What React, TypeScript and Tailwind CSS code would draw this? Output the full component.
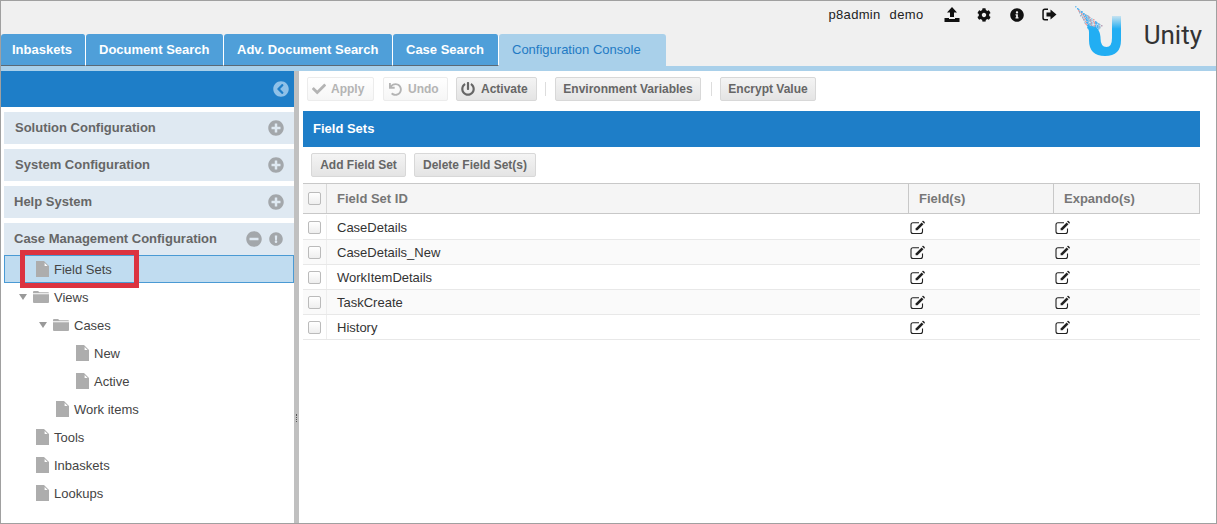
import React from "react";
import { FaCheck, FaUndo, FaPowerOff, FaPlusCircle, FaMinusCircle, FaExclamationCircle, FaChevronCircleLeft, FaCog, FaInfoCircle } from "react-icons/fa";

const UploadIcon = () => (
  <svg width="16" height="16" viewBox="0 0 16 16" fill="#111">
    <path d="M8 0 L13 5.5 H10 V10 H6 V5.5 H3 Z" />
    <path d="M0.5 11 H5 V12 H11 V11 H15.5 V15 H0.5 Z" />
  </svg>
);
const SignOutIcon = () => (
  <svg width="15" height="14" viewBox="0 0 15 14" fill="#111">
    <path d="M6 2 H3 Q1.8 2 1.8 3.2 V9.8 Q1.8 11 3 11 H6 V12.5 H2.8 Q0.3 12.5 0.3 10 V3 Q0.3 0.5 2.8 0.5 H6 Z" />
    <path d="M4.5 4.5 H8.5 V1.5 L14.5 6.5 L8.5 11.5 V8.5 H4.5 Z" />
  </svg>
);
const EditIcon = () => (
  <svg width="16" height="15" viewBox="0 0 16 15" className="shrink-0">
    <path d="M9 2.7 H3 Q1 2.7 1 4.7 V11.5 Q1 13.5 3 13.5 H10.5 Q12.5 13.5 12.5 11.5 V8.5" fill="none" stroke="#222" strokeWidth="1.1" />
    <path d="M5.6 8.4 L11.6 2.4 L13.5 4.3 L7.5 10.3 H5.6 Z" fill="#222" />
    <path d="M12.4 1.1 Q13 0.5 13.6 1.1 L14.6 2.1 Q15.2 2.7 14.6 3.3 L14.2 3.7 L12.1 1.6 Z" fill="#222" />
  </svg>
);
const FileIcon = () => (
  <svg width="13" height="16" viewBox="0 0 13 16" className="shrink-0">
    <path d="M0 0 H8 L13 5 V16 H0 Z" fill="#adadad" />
    <path d="M8.6 2 L11.6 5 H8.6 Z" fill="#ffffff" />
  </svg>
);
const FolderIcon = () => (
  <svg width="16" height="12" viewBox="0 0 16 12" className="shrink-0">
    <path d="M0 1 Q0 0 1 0 H5 L6.5 1.2 H15 Q16 1.2 16 2.2 H0 Z" fill="#adadad" />
    <path d="M0 3.2 H16 V11 Q16 12 15 12 H1 Q0 12 0 11 Z" fill="#adadad" />
  </svg>
);
const Caret = () => <span className="w-0 h-0 shrink-0 border-l-[4px] border-r-[4px] border-t-[6px] border-l-transparent border-r-transparent border-t-[#999]" />;

const Logo = () => {
  const palette = ["#7cc4ee", "#e8a0a0", "#9bb8cc", "#59b3ee", "#b8a0b8", "#4fb0f0", "#a8d0e8"];
  const dots: { x: number; y: number; c: string }[] = [];
  for (let i = 0; i < 130; i++) {
    const t = Math.sqrt(i / 130);
    const cx = 4 + t * 22;
    const cy = 2 + t * 24;
    const spread = t * 5;
    const off = ((i * 37) % 13) / 6.5 - 1;
    dots.push({ x: Math.round(cx + off * spread), y: Math.round(cy - off * spread), c: palette[(i * 5) % 7] });
  }
  return (
    <svg width="52" height="54" viewBox="0 0 52 54" className="shrink-0">
      <defs>
        <linearGradient id="fade" x1="0" y1="0" x2="0" y2="1">
          <stop offset="0" stopColor="#22aef3" stopOpacity="0.2" />
          <stop offset="0.32" stopColor="#22aef3" />
        </linearGradient>
      </defs>
      {dots.map((d, i) => <rect key={i} x={d.x} y={d.y} width="1.5" height="1.5" fill={d.c} />)}
      <path d="M16 21 L25 23 Q29 27 29.5 33 V34 Q29.5 43 35.5 43 Q41 43 41 34 V12 H50 V36 Q50 52 34 52 Q18 52 18 36 V28 Q18 25 16 21 Z" fill="url(#fade)" />
    </svg>
  );
};

const tabs: [string, string][] = [
  ["Inbaskets", "w-[85px] pl-[11px]"],
  ["Document Search", "w-[138px] pl-[13px]"],
  ["Adv. Document Search", "w-[169px] pl-[13px]"],
  ["Case Search", "w-[106px] pl-[13px]"],
];
const Btn = ({ children, off, cls = "" }: { children: React.ReactNode; off?: boolean; cls?: string }) => (
  <div className={`h-6 flex items-center rounded-[2px] border text-[12px] font-bold bg-gradient-to-b ${off ? "border-[#ececec] from-white to-[#f6f6f6] text-[#b4b4b4]" : "border-[#d8d8d8] from-[#f4f4f4] to-[#e4e4e4] text-[#666]"} ${cls}`}>{children}</div>
);
const Section = ({ title, px = "pl-[11px]" }: { title: string; px?: string }) => (
  <div className={`h-8 mb-[5px] bg-[#dfe9f2] flex items-center justify-between ${px} pr-[10px] text-[13px] font-bold text-[#666]`}>
    <span>{title}</span>
    <FaPlusCircle size={16} color="#a3a7ab" />
  </div>
);
const Tree = ({ label, indent, folder }: { label: string; indent: string; folder?: boolean }) => (
  <div className={`h-7 flex items-center text-[13px] text-[#444] ${indent}`}>
    {folder ? <Caret /> : null}
    <span className={folder ? "ml-[6px]" : ""}>{folder ? <FolderIcon /> : <FileIcon />}</span>
    <span className="ml-[5px] pt-[2px]">{label}</span>
  </div>
);
const Check = () => <span className="block w-[13px] h-[13px] rounded-[2px] border border-[#bbb] bg-gradient-to-b from-white to-[#eee]" />;
const rowsData = ["CaseDetails", "CaseDetails_New", "WorkItemDetails", "TaskCreate", "History"];

export default function App() {
  return (
    <div className="w-[1217px] h-[524px] flex flex-col border border-[#a0a0a0] bg-white overflow-hidden [font-family:'Liberation_Sans',Arial,sans-serif]">
      <header className="h-[65px] shrink-0 bg-[#f0f0f0] flex justify-between">
        <div className="self-end flex h-[32px]">
          {tabs.map(([t, c]) => (
            <div key={t} className={`h-[32px] ${c} bg-[#4f9fd9] border-r border-white border-b border-b-[#5a6a76] text-white text-[13px] font-bold flex items-center rounded-t-[3px]`}>{t}</div>
          ))}
          <div className="h-[32px] w-[167px] pl-[13px] bg-[#a9d0ea] text-[#1f7ac4] text-[13px] flex items-center rounded-t-[3px]">Configuration Console</div>
        </div>
        <div className="flex items-start pr-[14px]">
          <div className="flex items-center mt-[4px]">
            <span className="text-[13px] text-[#222] mr-[9px] tracking-[0.3px]">p8admin</span>
            <span className="text-[13px] text-[#222] mr-[20px] tracking-[0.4px]">demo</span>
            <span className="mr-[17px]"><UploadIcon /></span>
            <span className="mr-[19px]"><FaCog size={14} color="#111" /></span>
            <span className="mr-[18px]"><FaInfoCircle size={14} color="#111" /></span>
            <SignOutIcon />
          </div>
          <div className="ml-[14px] mt-[3px]"><Logo /></div>
          <span className="ml-[21px] mt-[18px] text-[26px] leading-[32px] text-[#333] [font-family:'Roboto',sans-serif]">Unity</span>
        </div>
      </header>
      <div className="h-[5px] shrink-0 bg-[#a9d0ea]" />
      <div className="flex-1 flex min-h-0">
        <aside className="w-[293px] shrink-0 relative">
          <div className="h-9 bg-[#1e7ec8] flex items-center justify-end pr-[5px] mb-[5px]">
            <FaChevronCircleLeft size={16} color="#8fc1e8" />
          </div>
          <div className="pl-[3px]">
            <Section title="Solution Configuration" />
            <Section title="System Configuration" />
            <Section title="Help System" px="pl-[10px]" />
            <div className="h-8 bg-[#dfe9f2] flex items-center justify-between pl-[10px] pr-[11px] text-[13px] font-bold text-[#666]">
              <span>Case Management Configuration</span>
              <span className="flex items-center gap-[7px]"><FaMinusCircle size={16} color="#a3a7ab" /><FaExclamationCircle size={14} color="#a3a7ab" /></span>
            </div>
            <div className="h-7 bg-[#c0dcf0] border border-[#4a9ad4] flex items-center pl-[31px] text-[13px] text-[#444]">
              <FileIcon /><span className="ml-[5px] pt-[2px]">Field Sets</span>
            </div>
          </div>
          <div className="absolute left-[19px] top-[179px] w-[119px] h-[38px] border-[5px] border-[#dc3340]" />
          <Tree label="Views" indent="pl-[18px]" folder />
          <Tree label="Cases" indent="pl-[38px]" folder />
          <Tree label="New" indent="pl-[75px]" />
          <Tree label="Active" indent="pl-[75px]" />
          <Tree label="Work items" indent="pl-[55px]" />
          <Tree label="Tools" indent="pl-[35px]" />
          <Tree label="Inbaskets" indent="pl-[35px]" />
          <Tree label="Lookups" indent="pl-[35px]" />
        </aside>
        <div className="w-[5px] shrink-0 bg-[#c0c0c0] flex items-center justify-center pt-[1px]">
          <span className="w-px h-[8px] mt-[240px] border-l border-dotted border-[#555]" />
        </div>
        <main className="flex-1 min-w-0 pl-[4px] pr-[16px]">
          <div className="h-[40px] flex items-start pt-[6px] pl-[4px]">
            <Btn off cls="w-[67px] mr-[9px] pl-[4px] gap-[5px]"><FaCheck size={14} color="#b4b4b4" />Apply</Btn>
            <Btn off cls="w-[65px] mr-[8px] pl-[5px] gap-[6px]"><FaUndo size={13} color="#b4b4b4" />Undo</Btn>
            <Btn cls="w-[81px] mr-[8px] pl-[4px] gap-[6px]"><FaPowerOff size={14} color="#666" />Activate</Btn>
            <span className="w-px h-[14px] mt-[5px] bg-[#ddd] mr-[9px]" />
            <Btn cls="w-[146px] mr-[10px] justify-center">Environment Variables</Btn>
            <span className="w-px h-[14px] mt-[5px] bg-[#ddd] mr-[8px]" />
            <Btn cls="w-[96px] justify-center">Encrypt Value</Btn>
          </div>
          <div className="h-9 bg-[#1e7ec8] flex items-center pl-[10px] pb-[1px] text-white text-[13px] font-bold">Field Sets</div>
          <div className="flex gap-2 pl-[8px] pt-[6px] pb-[6px]">
            <Btn cls="w-[95px] justify-center">Add Field Set</Btn>
            <Btn cls="w-[122px] justify-center">Delete Field Set(s)</Btn>
          </div>
          <div className="grid grid-cols-[24px_582px_145px_146px] h-[31px] border-y border-[#c8c8c8] bg-[#f5f5f5] text-[13px] font-bold text-[#777]">
            <div className="flex items-center pl-[5px] border-r border-[#d8d8d8]"><Check /></div>
            <div className="flex items-center pl-[10px] border-r border-[#c8c8c8]">Field Set ID</div>
            <div className="flex items-center pl-[10px] border-r border-[#c8c8c8]">Field(s)</div>
            <div className="flex items-center pl-[10px] border-r border-[#c8c8c8]">Expando(s)</div>
          </div>
          <div className="pt-px">
            {rowsData.map((r, i) => (
              <div key={r} className={`grid grid-cols-[24px_582px_145px_146px] h-[25px] border-b border-[#e8e8e8] text-[13px] text-[#333] ${i % 2 ? "bg-[#fafafa]" : "bg-white"}`}>
                <div className="flex items-center pl-[5px] border-r border-[#eee]"><Check /></div>
                <div className="flex items-center pl-[10px] pt-[2px]">{r}</div>
                <div className="flex items-center pl-[1px]"><EditIcon /></div>
                <div className="flex items-center pl-[1px]"><EditIcon /></div>
              </div>
            ))}
          </div>
        </main>
      </div>
    </div>
  );
}
